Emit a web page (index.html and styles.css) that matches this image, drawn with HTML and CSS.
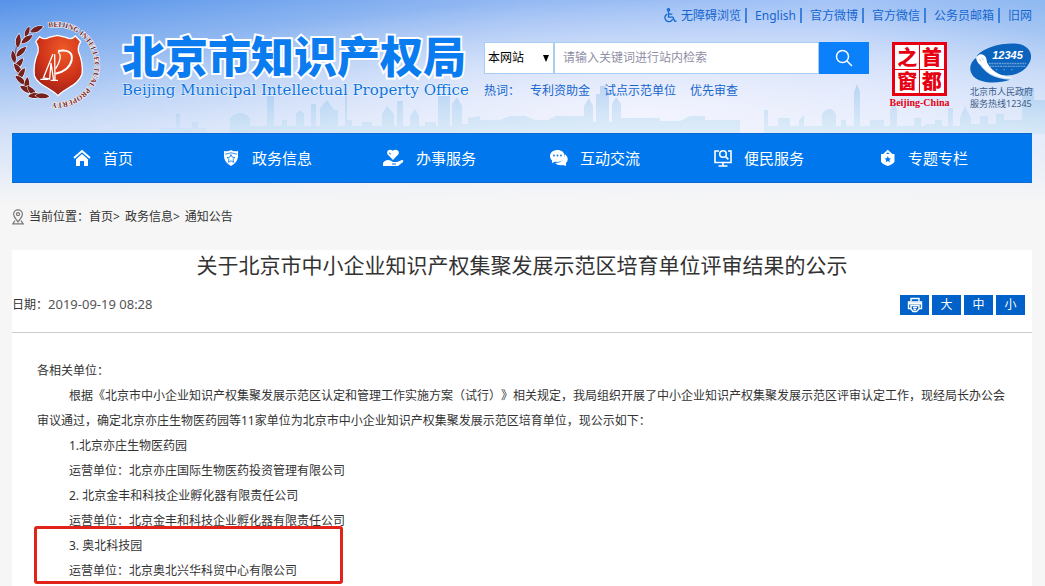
FILE: index.html
```html
<!DOCTYPE html>
<html lang="zh-CN">
<head>
<meta charset="utf-8">
<title>关于北京市中小企业知识产权集聚发展示范区培育单位评审结果的公示</title>
<link rel="stylesheet" href="styles.css">
</head>
<body>
<svg class="skyline" viewBox="0 0 1045 50" preserveAspectRatio="none" aria-hidden="true">
  <defs>
    <linearGradient id="haze" x1="0" y1="0" x2="0" y2="1">
      <stop offset="0" stop-color="#7db4e8" stop-opacity=".42"/>
      <stop offset="1" stop-color="#b5e0ee" stop-opacity=".3"/>
    </linearGradient>
  </defs>
  <g fill="url(#haze)">
    <path d="M160 50V44H176V30H180V44H192V38H198V44H206V50Z" opacity=".5"/>
    <path d="M230 50V34Q240 24 250 34V42H267V12H274V42H282V36H287V42H296V30L300 26L304 30V42H311V20H316V42H320V24L327 16L334 26H338V42H345V6L346 2L347 6V36H352V42H362V38H372V42H382V30L387 22L394 30V42H397V17H403V42H410V32L415 25L419 32V42H425V38H436V42H438V12H450V42H452V20L457 13L462 22V40H468V34L480 32V50Z"/>
    <path d="M480 50V36H500L510 32H525L535 36H548L556 32H584V22L589 14L593 22V38H596V10H600V2H606V8H609V38H612V20L616 13L621 20V34H660V37H680L690 32H705V36H740V50Z"/>
    <path d="M764 50V26H768V42H778V34H790V42H799V36L804 31V42H822V30Q830 20 836 30V42H841V36H846V42H854V8L857 0L860 8V42H870V36H884V42H890V26L894 18L897 26V42H914V34H921V42H925V40H935V36H942V42H948V24H953V42H960V34L965 22L971 34V40H980V32H988V40H996V30H1004V36H1022V4H1034V16H1045V50Z"/>
  </g>
</svg>

<div class="page">
  <header class="header">
    <div class="brand">
      <svg class="emblem" viewBox="36 55 276 276" role="img" aria-label="北京市知识产权局徽标">
        <defs>
          <radialGradient id="shield" cx=".6" cy=".25" r=".85">
            <stop offset="0" stop-color="#ee5a28"/><stop offset=".55" stop-color="#cf3319"/><stop offset="1" stop-color="#8f1d17"/>
          </radialGradient>
          <path id="ring" d="M146 84A114 114 0 1 1 138 305"/>
          <path id="leaf" d="M0 0C10 -12 26 -14 42 -5C30 5 14 8 0 0Z"/>
        </defs>
        <g fill="#74201f" stroke="#fff" stroke-width="3" paint-order="stroke">
          <path d="M50 140C34 195 54 275 142 293" fill="none" stroke="#74201f" stroke-width="2"/>
          <use href="#leaf" transform="translate(91 98) rotate(-18)"/>
          <use href="#leaf" transform="translate(76 112) rotate(-62) scale(.8)"/>
          <use href="#leaf" transform="translate(64 131) rotate(-30)"/>
          <use href="#leaf" transform="translate(53 144) rotate(-77)"/>
          <use href="#leaf" transform="translate(49 171) rotate(-38)"/>
          <use href="#leaf" transform="translate(45 190) rotate(-95) scale(.9)"/>
          <use href="#leaf" transform="translate(45 210) rotate(-48)"/>
          <use href="#leaf" transform="translate(42 192) rotate(62)"/>
          <use href="#leaf" transform="translate(54 242) rotate(-54)"/>
          <use href="#leaf" transform="translate(46 228) rotate(48)"/>
          <use href="#leaf" transform="translate(80 274) rotate(-80)"/>
          <use href="#leaf" transform="translate(60 260) rotate(36)"/>
          <use href="#leaf" transform="translate(110 290) rotate(-125)"/>
          <use href="#leaf" transform="translate(84 290) rotate(2)"/>
          <use href="#leaf" transform="translate(106 288) rotate(10)"/>
        </g>
        <path d="M119 111Q133 122 147 113L172 107L198 113Q214 122 226 109L242 126Q232 142 236 158Q250 190 246 224C234 258 197 263 174 288C151 263 114 258 103 228Q99 192 114 158Q117 141 107 126Z" fill="url(#shield)" stroke="#fff" stroke-width="4"/>
        <g fill="none" stroke="#fff">
          <path d="M174 154C204 148 219 159 215 181C210 205 188 218 166 222" stroke-width="6"/>
          <path d="M174 157C185 165 181 184 167 207" stroke-width="4"/>
          <path d="M159 163L130 235L149 238L153 190L161 242" stroke-width="4"/>
          <path d="M164 164L165 240M121 239H145M152 242H174" stroke-width="4"/>
        </g>
        <text class="ring-text"><textPath href="#ring">BEIJING INTELLECTUAL PROPERTY</textPath></text>
      </svg>
      <div class="brand-text">
        <div class="brand-cn">北京市知识产权局</div>
        <div class="brand-en">Beijing Municipal Intellectual Property Office</div>
      </div>
    </div>

    <div class="tools">
      <nav class="toplinks" aria-label="快捷链接">
        <a href="#"><svg class="access" viewBox="0 0 14 16" aria-hidden="true"><g fill="none" stroke="currentColor" stroke-width="1.4"><circle cx="5.4" cy="2" r="1.2"/><path d="M5.4 3.6V9.8H10L12 14H14M5.5 6.6H9.5M3.8 6.5A4.3 4.3 0 1 0 9.8 12"/></g></svg>无障碍浏览</a>
        <a href="#">English</a>
        <a href="#">官方微博</a>
        <a href="#">官方微信</a>
        <a href="#">公务员邮箱</a>
        <a href="#">旧网</a>
      </nav>
      <div class="tool-row">
        <div class="search-area">
          <form class="search">
            <span class="scope"><select aria-label="搜索范围"><option>本网站</option></select></span>
            <input type="text" aria-label="站内检索" placeholder="请输入关键词进行站内检索">
            <button type="button" aria-label="搜索"><svg viewBox="0 0 18 18" aria-hidden="true"><g fill="none" stroke="#fff" stroke-width="1.5" stroke-linecap="round"><circle cx="7.5" cy="7.5" r="6"/><path d="M12 12L16.5 16.5"/></g></svg></button>
          </form>
          <div class="hot"><span>热词：</span><a href="#">专利资助金</a><a href="#">试点示范单位</a><a href="#">优先审查</a></div>
        </div>
        <a class="capital" href="#">
          <span class="seal"><span>之</span><span>首</span><span>窗</span><span>都</span></span>
          <span class="seal-label">Beijing-China</span>
        </a>
        <a class="hotline" href="#">
          <svg viewBox="655 125 192 127" aria-hidden="true">
            <path d="M676 166C700 140 754 125 801 129C840 134 854 164 837 191C822 220 784 231 753 226C726 219 708 204 699 178Z" fill="#0b63bd"/>
            <path d="M673 173C653 188 650 213 666 230C688 251 738 254 779 240C733 239 697 222 673 173Z" fill="#0b63bd"/>
            <path d="M680 178C697 215 731 239 792 235C747 231 715 211 704 177Z" fill="#fff"/>
            <ellipse cx="691" cy="178" rx="15" ry="17" transform="rotate(-24 691 178)" fill="#fff"/>
            <path d="M684 176L690 184M691 172L697 180" stroke="#7da6d5" stroke-width="2"/>
            <path d="M713 190H829M716 199H827" stroke="#8fb9e5" stroke-width="4" stroke-dasharray="6 2" opacity=".7"/>
            <path d="M735 209H802" stroke="#6da3dd" stroke-width="4" stroke-dasharray="4 20"/>
            <text class="hotline-number" x="724" y="175">12345</text>
          </svg>
          <span>北京市人民政府</span>
          <span>服务热线12345</span>
        </a>
      </div>
    </div>
  </header>

  <nav class="mainnav" aria-label="主导航">
    <a href="#"><svg viewBox="0 0 18 18" aria-hidden="true"><path d="M1 9L9 2L17 9" fill="none" stroke="#fff" stroke-width="2"/><path d="M3 10.2L9 5L15 10.2V17H11V12H7V17H3Z" fill="#fff"/></svg><span>首页</span></a>
    <a href="#"><svg viewBox="0 0 18 18" aria-hidden="true"><path d="M2 2Q6 3 9 1Q12 3 16 2V8Q15 14 9 17Q3 14 2 8Z" fill="#fff"/><path d="M3 5.2Q9 2.4 15 5.2" fill="none" stroke="#0077ec" stroke-width=".8"/><path d="M9 5.5L10.2 8.2L13 8.5L11 10.4L11.6 13.3L9 11.8L6.4 13.3L7 10.4L5 8.5L7.8 8.2Z" fill="#fff" stroke="#0077ec" stroke-width=".8"/></svg><span>政务信息</span></a>
    <a href="#"><svg class="hand" viewBox="0 0 22 18" aria-hidden="true"><g fill="#fff"><path d="M11 11L5.7 5.5C3.5 2.5 7.5-.8 10.7 1.8C14-.8 18.5 2.2 16.2 5.5Z"/><path d="M1 14C4 9.5 8 10.8 11 13H15L20 11Q22 11 21 13L16 17H1Z"/></g><path d="M7 3.8L9 5.4M10 15H14" stroke="#0077ec" stroke-width="1"/></svg><span>办事服务</span></a>
    <a href="#"><svg viewBox="0 0 18 18" aria-hidden="true"><path d="M15 5Q20 10 16 14V17L13 16Q8 17 5 14Q14 14 15 5Z" fill="#fff"/><path d="M7.5 1C3.5 1 0 3.3 0 7C0 9 1 10.5 2 11.5V14L5 12.8C11 13.6 14.5 10.8 14.5 7C14.5 3.3 11.5 1 7.5 1Z" fill="#fff"/><g fill="#0077ec"><circle cx="4" cy="6.5" r=".9"/><circle cx="7.5" cy="6.5" r=".9"/><circle cx="11" cy="6.5" r=".9"/></g></svg><span>互动交流</span></a>
    <a href="#"><svg viewBox="0 0 18 18" aria-hidden="true"><g fill="none" stroke="#fff" stroke-width="1.6"><path d="M5 2H1V13.5H17V2H14M9 13.5V17M4.5 17H13.5"/><circle cx="9" cy="5" r="3.3"/><path d="M11.4 7.4L14.4 10.4"/></g></svg><span>便民服务</span></a>
    <a href="#"><svg viewBox="0 0 18 18" aria-hidden="true"><path d="M6 5.5L9.8 2L13.6 5.5" fill="none" stroke="#fff" stroke-width="1.8"/><path d="M3 5H16.5V12.5Q15.5 15 9.8 17Q4 15 3 12.5Z" fill="#fff"/><path d="M9.8 7L10.8 9.2L13 9.4L11.4 11L11.9 13.2L9.8 12.1L7.7 13.2L8.2 11L6.6 9.4L8.8 9.2Z" fill="#0077ec"/></svg><span>专题专栏</span></a>
  </nav>

  <nav class="crumbs" aria-label="当前位置">
    <svg viewBox="0 0 12 16" aria-hidden="true"><g fill="none" stroke="#777" stroke-width="1.2"><path d="M6 13C4 10 1.6 8 1.6 5.2A4.4 4.4 0 0 1 10.4 5.2C10.4 8 8 10 6 13Z"/><circle cx="6" cy="5.2" r="1.5"/><path d="M3 11.5L.8 14.8H11.2L9 11.5"/></g></svg>
    <span>当前位置：<a href="#">首页</a>&gt;</span>
    <span><a href="#">政务信息</a>&gt;</span>
    <a href="#">通知公告</a>
  </nav>

  <main class="article">
    <h1>关于北京市中小企业知识产权集聚发展示范区培育单位评审结果的公示</h1>
    <div class="meta">
      <div>日期：<time datetime="2019-09-19T08:28">2019-09-19 08:28</time></div>
      <div class="actions">
        <button type="button" aria-label="打印"><svg viewBox="0 0 16 16" aria-hidden="true"><g fill="none" stroke="#fff" stroke-width="1.4"><path d="M4 4.5V1.5H12V4.5"/><path d="M4 11.5H1.5V5H14.5V11.5H12"/><path d="M2 6.5H14" stroke-width="2"/><path d="M4 8.5H12V12L9.5 14.5H6L4 12Z" fill="#0062c9"/><path d="M6 10.5H10M6.5 12.5H9"/></g></svg></button>
        <button type="button">大</button>
        <button type="button">中</button>
        <button type="button">小</button>
      </div>
    </div>
    <div class="body">
      <p class="salute">各相关单位：</p>
      <p>根据《北京市中小企业知识产权集聚发展示范区认定和管理工作实施方案（试行）》相关规定，我局组织开展了中小企业知识产权集聚发展示范区评审认定工作，现经局长办公会审议通过，确定北京亦庄生物医药园等11家单位为北京市中小企业知识产权集聚发展示范区培育单位，现公示如下：</p>
      <p>1.北京亦庄生物医药园</p>
      <p>运营单位：北京亦庄国际生物医药投资管理有限公司</p>
      <p>2. 北京金丰和科技企业孵化器有限责任公司</p>
      <p>运营单位：北京金丰和科技企业孵化器有限责任公司</p>
      <div class="marked">
        <p>3. 奥北科技园</p>
        <p>运营单位：北京奥北兴华科贸中心有限公司</p>
      </div>
    </div>
  </main>
</div>
</body>
</html>
```

FILE: styles.css
```css
*, *::after { box-sizing: border-box; }

body {
  margin: 0;
  position: relative;
  min-height: 100vh;
  color: #333;
  font: 12px/18px "Noto Sans", "Noto Sans CJK SC", sans-serif;
  text-spacing-trim: space-all;
  background:
    radial-gradient(ellipse 560px 110px at 640px 110px, rgba(250, 248, 255, .75), transparent) no-repeat,
    linear-gradient(to bottom, rgba(246, 247, 253, 0) 0, rgba(246, 247, 253, .45) 70px, rgba(246, 247, 253, .75) 125px, #f6f6f6 204px),
    linear-gradient(to right, #5592e8 0, #74a6ee 25%, #94b9f3 50%, #a5c4f7 80%, #8eb8f1 100%);
}

a { color: inherit; text-decoration: none; }
button, input, select { font: inherit; border: 0; border-radius: 0; margin: 0; }
p, h1 { margin: 0; }

.skyline {
  position: absolute;
  top: 84px;
  left: 0;
  width: 100%;
  height: 50px;
}

.page { position: relative; padding: 0 13px 0 12px; }

/* Header */
.header { display: flex; gap: 20px; min-height: 133px; }
.brand { display: flex; gap: 18px; flex: none; }
.emblem { width: 92px; height: 92px; margin-top: 18px; overflow: visible; }
.ring-text {
  font: bold 22px "Liberation Serif", serif;
  fill: #7c2422;
  stroke: #fff;
  stroke-width: 3px;
  paint-order: stroke;
}
.brand-text { padding-top: 28px; width: 342px; white-space: nowrap; }
.brand-cn {
  font: 900 43px/52px "Noto Sans CJK SC", sans-serif;
  color: #0a7cf0;
  -webkit-text-stroke: 4px #fff;
  paint-order: stroke fill;
}
.brand-en {
  font: 15px/20px "DejaVu Serif", serif;
  color: #0a73e0;
  -webkit-text-stroke: 1px rgba(255, 255, 255, .8);
  paint-order: stroke fill;
}

.tools { flex: 1; min-width: 0; color: #1466cf; }
.toplinks { display: flex; justify-content: flex-end; padding-top: 8px; line-height: 15px; white-space: nowrap; }
.toplinks a { display: flex; gap: 4px; padding-left: 8px; }
.toplinks a:not(:last-child) { padding-right: 4px; border-right: 2px solid #3d80dc; }
.access { width: 14px; height: 15px; }

.tool-row { display: flex; gap: 20px; padding-top: 19px; }
.search-area { flex: 1; min-width: 0; }
.search { display: flex; height: 32px; }
.scope { position: relative; flex: none; width: 70px; background: #fff; border: 1px solid #a8cdf5; }
.scope::after {
  content: "";
  position: absolute;
  right: 4px;
  top: 12px;
  border: 3px solid transparent;
  border-top: 7px solid #000;
  border-bottom: 0;
  pointer-events: none;
}
.scope select { appearance: none; width: 100%; height: 100%; padding: 0 3px; background: none; color: #000; }
.search input { flex: 1; min-width: 0; padding: 0 8px; background: #fff; border: 1px solid #a8cdf5; }
.search input::placeholder { color: #8f8fa8; }
.search button { width: 50px; background: #0a80fb; display: grid; place-items: center; padding: 0; }
.search button svg { width: 18px; height: 18px; }
.hot { display: flex; gap: 14px; padding-top: 8px; white-space: nowrap; }
.hot span { margin-right: -4px; }

.capital { display: flex; flex-direction: column; align-items: center; flex: none; width: 61px; color: #e60012; }
.seal {
  display: grid;
  grid-template-columns: 1fr 1fr;
  width: 55px;
  height: 54px;
  border: 3px solid currentColor;
  background: linear-gradient(currentColor, currentColor) center / 1px 100% no-repeat,
    linear-gradient(currentColor, currentColor) center / 100% 1px no-repeat, #fff;
  font: 900 20px/24px "Noto Sans CJK SC", sans-serif;
  text-align: center;
}
.seal-label { font: bold 10px/14px "Liberation Serif", serif; }
.hotline { flex: none; width: 62px; color: #3c5b86; font-size: 9px; line-height: 12px; white-space: nowrap; }
.hotline svg { display: block; width: 62px; height: 42px; margin-bottom: 2px; }
.hotline span { display: block; }
.hotline-number { font: italic bold 34px "Liberation Sans", sans-serif; fill: #fff; }

/* Main navigation */
.mainnav {
  display: grid;
  grid-template-columns: repeat(6, 1fr);
  padding: 0 12px 0 24px;
  background: #0077ec;
  border-top: 1px solid #0a68d2;
  border-bottom: 1px solid #0a68d2;
  color: #fff;
  font-size: 15px;
  line-height: 48px;
}
.mainnav a {
  display: grid;
  grid-template-columns: 1fr auto 1fr;
  column-gap: 12px;
  align-items: center;
  height: 48px;
}
.mainnav svg { justify-self: end; width: 18px; height: 18px; }
.mainnav .hand { width: 22px; }

.crumbs { display: flex; align-items: center; gap: 5px; padding: 25px 0 24px; }
.crumbs svg { width: 12px; height: 16px; }

/* Article */
.article { background: #fff; padding-bottom: 25px; }
.article h1 { font-size: 21px; line-height: 30px; font-weight: 400; text-align: center; }
.meta {
  display: flex;
  justify-content: space-between;
  padding: 15px 7px 17px 0;
  border-bottom: 1px solid #ccc;
}
.meta time { color: #555; font-size: 13px; }
.actions { display: flex; gap: 3px; }
.actions button {
  display: grid;
  place-items: center;
  width: 29px;
  height: 20px;
  padding: 0;
  background: #0062c9;
  color: #fff;
}
.actions svg { width: 16px; height: 16px; }

.body { padding: 25px 25px 0; line-height: 25px; }
.body p { text-indent: 32px; }
.body .salute { text-indent: 0; }
.marked { position: relative; }
.marked::after {
  content: "";
  position: absolute;
  top: -7px;
  left: -3px;
  width: 309px;
  height: 58px;
  border: 3px solid #e2231a;
  border-radius: 3px;
}
```
